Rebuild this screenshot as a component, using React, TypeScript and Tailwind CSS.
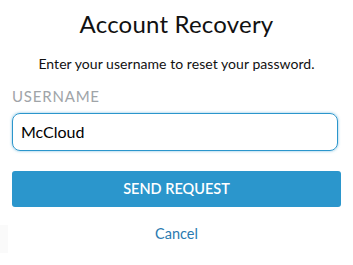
import React from "react";

export default function App() {
  return (
    <div className="w-[353px] h-[265px] bg-white relative overflow-hidden" style={{ fontFamily: "Lato, 'Noto Sans', sans-serif" }}>
      <div className="absolute left-0 top-[225px] w-[8px] h-[28px] bg-[#fafafa]" />
      <div className="px-3 pt-[10px] flex flex-col">
        <h1 className="text-center text-[24px] leading-[28px] text-[#111] font-normal tracking-[0.2px]">Account Recovery</h1>
        <p className="mt-[16px] text-center text-[14px] leading-[20px] text-[#111] tracking-[0.05px]">Enter your username to reset your password.</p>
        <label className="mt-[12px] text-[15px] leading-[20px] text-[#a0a4a8] tracking-[0.8px]">USERNAME</label>
        <div className="mt-[7px] h-[38px] w-[326px] rounded-[8px] border border-[#2b96cc] shadow-[0_0_3px_rgba(43,150,204,0.6)] flex items-center px-[8px] text-[16px] text-black">
          McCloud
        </div>
        <button className="mt-[20px] h-[36px] w-full rounded-[3px] bg-[#2b96cc] text-white text-[14.5px] font-semibold">SEND REQUEST</button>
        <div className="mt-[17px] text-center text-[14.5px] leading-[20px] text-[#2a7ab0]">Cancel</div>
      </div>
    </div>
  );
}
